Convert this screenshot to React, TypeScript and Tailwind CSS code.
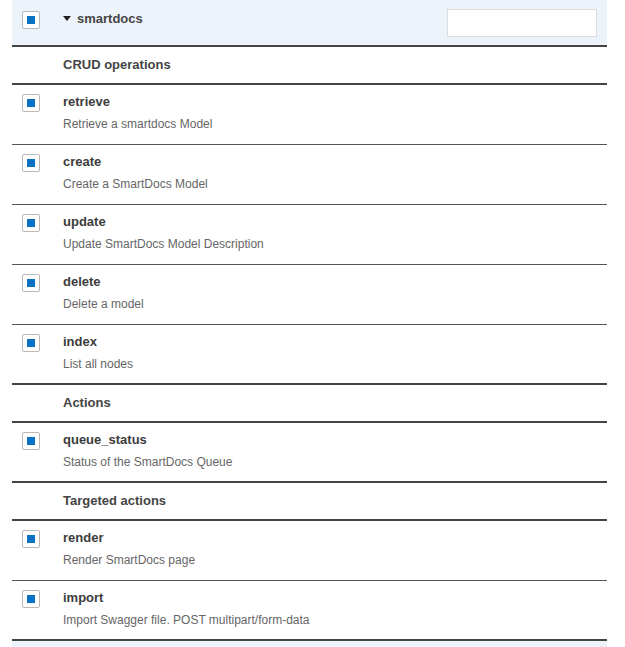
import React from "react";

type Item = { name: string; desc: string };
type Section = { title: string; items: Item[] };

const sections: Section[] = [
  {
    title: "CRUD operations",
    items: [
      { name: "retrieve", desc: "Retrieve a smartdocs Model" },
      { name: "create", desc: "Create a SmartDocs Model" },
      { name: "update", desc: "Update SmartDocs Model Description" },
      { name: "delete", desc: "Delete a model" },
      { name: "index", desc: "List all nodes" },
    ],
  },
  {
    title: "Actions",
    items: [{ name: "queue_status", desc: "Status of the SmartDocs Queue" }],
  },
  {
    title: "Targeted actions",
    items: [
      { name: "render", desc: "Render SmartDocs page" },
      { name: "import", desc: "Import Swagger file. POST multipart/form-data" },
    ],
  },
];

function Check() {
  return (
    <div className="w-[18px] h-[18px] shrink-0 rounded-[2px] border border-[#b9b9b9] bg-white flex items-center justify-center">
      <div className="w-[8px] h-[8px] bg-[#0a72c2]" />
    </div>
  );
}

export default function App() {
  return (
    <div
      className="w-[625px] h-[647px] overflow-hidden bg-white"
      style={{ fontFamily: '"Liberation Sans", Arial, sans-serif' }}
    >
      <div className="ml-[12px] w-[595px]">
        {/* header */}
        <div className="h-[47px] bg-[#ecf3fa] border-b-2 border-[#444] flex items-start">
          <div className="w-[51px] pl-[10px] pt-[11px]">
            <Check />
          </div>
          <div className="flex items-center pt-[10px] gap-[6px]">
            <svg width="8" height="5" viewBox="0 0 8 5" className="mt-[-1px]">
              <polygon points="0,0 8,0 4,5" fill="#222" />
            </svg>
            <span className="text-[13px] leading-[18px] font-bold text-[#444]">smartdocs</span>
          </div>
          <div className="ml-auto mr-[10px] mt-[9px] w-[150px] h-[28px] border border-[#dcdcdc] bg-white" />
        </div>

        {sections.map((s) => (
          <div key={s.title}>
            <div className="h-[38px] border-b-2 border-[#444] flex items-center pl-[51px]">
              <span className="text-[13px] leading-[18px] font-bold text-[#444]">{s.title}</span>
            </div>
            {s.items.map((it, i) => (
              <div
                key={it.name}
                className={
                  "h-[60px] flex items-start " +
                  (i === s.items.length - 1 ? "border-b-2 border-[#444]" : "border-b-[1.5px] border-[#555]")
                }
              >
                <div className="w-[51px] pl-[10px] pt-[9px]">
                  <Check />
                </div>
                <div className="pt-[8px]">
                  <div className="text-[13px] leading-[18px] font-bold text-[#3c3c3c]">{it.name}</div>
                  <div className="mt-[4px] text-[12px] leading-[18px] text-[#666]">{it.desc}</div>
                </div>
              </div>
            ))}
          </div>
        ))}
        <div className="h-[10px] bg-[#ecf3fa]" />
      </div>
    </div>
  );
}
